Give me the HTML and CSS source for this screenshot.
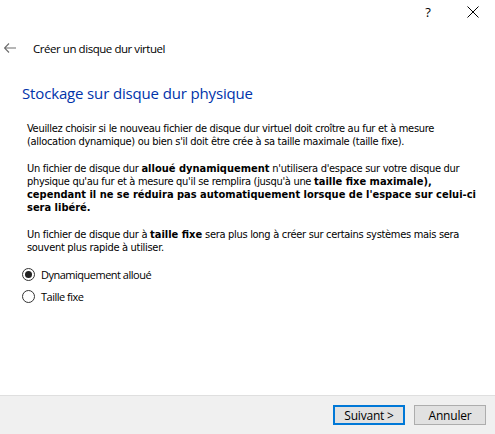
FILE: index.html
```html
<!DOCTYPE html>
<html lang="fr">
<head>
<meta charset="utf-8">
<link rel="stylesheet" href="styles.css">
</head>
<body>
<div class="window">
  <div class="titlebar">
    <div class="tbtn help">?</div>
    <div class="tbtn close">
      <svg width="12" height="12" viewBox="0 0 12 12"><path d="M0.5 0.5 L11.5 11.5 M11.5 0.5 L0.5 11.5" stroke="#000" stroke-width="1" fill="none"/></svg>
    </div>
  </div>
  <div class="nav">
    <svg class="back" width="12" height="10" viewBox="0 0 12 10"><path d="M0.5 5 H12 M5 0.5 L0.5 5 L5 9.5" stroke="#6e6e6e" stroke-width="1.2" fill="none"/></svg>
    <span class="navtitle">Créer un disque dur virtuel</span>
  </div>
  <main class="content">
    <h1 class="heading">Stockage sur disque dur physique</h1>
    <div class="body">
      <p>Veuillez choisir si le nouveau fichier de disque dur virtuel doit croître au fur et à mesure<br>(allocation dynamique) ou bien s'il doit être crée à sa taille maximale (taille fixe).</p>
      <p>Un fichier de disque dur <b>alloué dynamiquement</b> n'utilisera d'espace sur votre disque dur<br>physique qu'au fur et à mesure qu'il se remplira (jusqu'à une <b>taille fixe maximale),<br>cependant il ne se réduira pas automatiquement lorsque de l'espace sur celui-ci<br>sera libéré.</b></p>
      <p>Un fichier de disque dur à <b>taille fixe</b> sera plus long à créer sur certains systèmes mais sera<br>souvent plus rapide à utiliser.</p>
    </div>
    <div class="radios">
      <label class="radio"><span class="dot checked"></span>Dynamiquement alloué</label>
      <label class="radio"><span class="dot"></span>Taille fixe</label>
    </div>
  </main>
  <footer class="footer">
    <div class="btn primary">Suivant &gt;</div>
    <div class="btn">Annuler</div>
  </footer>
</div>
</body>
</html>
```
FILE: styles.css
```css
html, body {
  margin: 0;
  padding: 0;
  background: #fff;
}
.window {
  width: 495px;
  height: 434px;
  display: flex;
  flex-direction: column;
  font-family: "Open Sans", "Noto Sans", sans-serif;
  color: #000;
}
.titlebar {
  height: 30px;
  display: flex;
  justify-content: flex-end;
}
.tbtn {
  width: 46px;
  height: 24px;
  display: flex;
  align-items: center;
  justify-content: center;
  font-size: 12px;
}
.help {
  font-size: 13px;
  padding-left: 4px;
  box-sizing: border-box;
}
.close {
  padding-left: 2px;
  box-sizing: border-box;
}
.nav {
  height: 36px;
  display: flex;
  align-items: center;
  padding-left: 4px;
}
.back {
  margin-right: 17px;
}
.navtitle {
  font-size: 11.5px;
  letter-spacing: -0.45px;
}
.content {
  flex: 1;
  padding: 0 0 0 22px;
}
.heading {
  margin: 15px 0 0 0;
  font-size: 15px;
  font-weight: normal;
  color: #0033aa;
  letter-spacing: -0.15px;
  line-height: 24px;
}
.body {
  margin-top: 17px;
  padding-left: 5px;
  font-family: "DejaVu Sans Condensed", "DejaVu Sans", sans-serif;
  font-size: 11px;
  line-height: 13px;
  letter-spacing: -0.3px;
  white-space: nowrap;
}
.body b {
  letter-spacing: 0;
}
.body p {
  margin: 0 0 14px 0;
}
.radios {
  margin-top: 4px;
  display: flex;
  flex-direction: column;
  gap: 9px;
}
.radio {
  display: flex;
  align-items: center;
  font-size: 11px;
  height: 13px;
  letter-spacing: -0.5px;
}
.dot {
  width: 11px;
  height: 11px;
  border: 1px solid #333;
  border-radius: 50%;
  margin-right: 6px;
  box-sizing: content-box;
  display: flex;
  align-items: center;
  justify-content: center;
}
.dot.checked::after {
  content: "";
  width: 7px;
  height: 7px;
  border-radius: 50%;
  background: #222;
}
.footer {
  border-top: 1px solid #dfdfdf;
  background: #f0f0f0;
  display: flex;
  justify-content: flex-end;
  align-items: flex-start;
  padding: 9px 9px 0 0;
  gap: 9px;
  box-sizing: border-box;
  height: 39px;
}
.btn {
  width: 72px;
  height: 20px;
  box-sizing: border-box;
  border: 1px solid #adadad;
  background: #e1e1e1;
  font-size: 12px;
  display: flex;
  align-items: center;
  justify-content: center;
  letter-spacing: -0.2px;
}
.btn.primary {
  border: 2px solid #0078d7;
}
```
